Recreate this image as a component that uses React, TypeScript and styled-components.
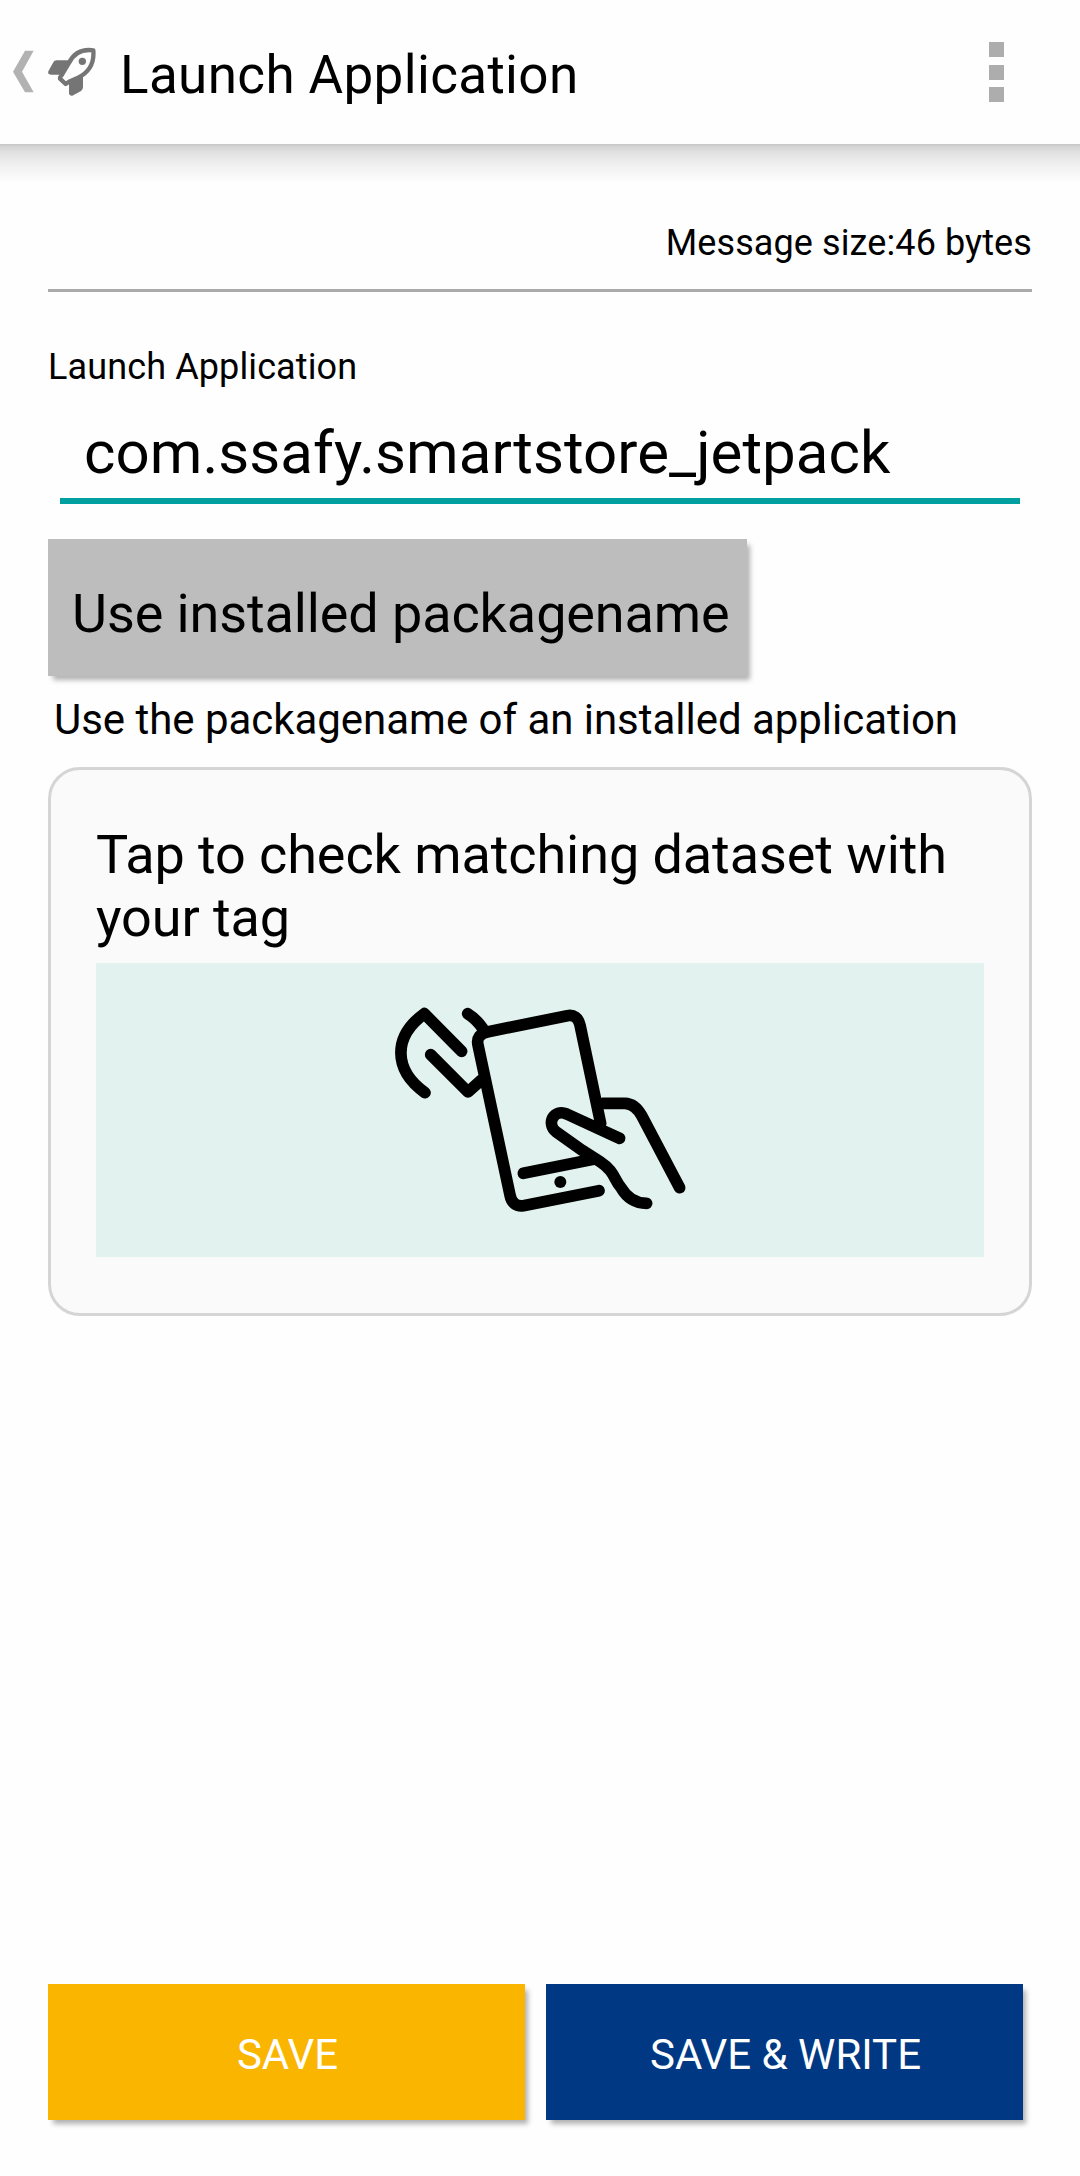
import React from "react";
import styled, { createGlobalStyle } from "styled-components";

const GlobalStyle = createGlobalStyle`
  * { box-sizing: border-box; }
  body {
    margin: 0;
    background: #fefefe;
    color: #000;
    font-family: Roboto, "Liberation Sans", sans-serif;
  }
  button {
    font-family: inherit;
    border: 0;
    margin: 0;
    padding: 0;
  }
`;

const Screen = styled.div`
  width: 1080px;
  height: 2176px;
  display: flex;
  flex-direction: column;
  overflow: hidden;
`;

const Header = styled.header`
  height: 144px;
  flex: none;
  display: flex;
  align-items: center;
  padding: 0 76px 0 12px;
  background: #fefefe;
`;

const HeaderShadow = styled.div`
  height: 40px;
  flex: none;
  background: linear-gradient(#c6c6c6 0, #d6d6d6 3px, #e2e2e2 9px, #efefef 20px, #f9f9f9 32px, #fefefe 40px);
`;

const Title = styled.h1`
  flex: 1;
  margin: 0 0 0 23px;
  padding-top: 5px;
  font-size: 53px;
  line-height: 62px;
  font-weight: 400;
  letter-spacing: 0.36px;
`;

const MenuButton = styled.button`
  display: flex;
  flex-direction: column;
  gap: 7.5px;
  background: none;
`;

const Square = styled.span`
  width: 15px;
  height: 15px;
  background: #adadad;
`;

const BackIcon = styled.svg`
  width: 23px;
  height: 44px;
`;

const RocketIcon = styled.svg`
  width: 50px;
  height: 50px;
  margin-left: 12px;
`;

const Content = styled.main`
  flex: 1;
  display: flex;
  flex-direction: column;
  padding: 38px 48px 56px;
`;

const Size = styled.div`
  height: 70px;
  border-bottom: 3px solid #aaa;
  text-align: right;
  font-size: 36px;
  line-height: 42px;
  letter-spacing: 0.1px;
`;

const Label = styled.label`
  margin-top: 54px;
  font-size: 36px;
  line-height: 42px;
  letter-spacing: 0.12px;
`;

const Field = styled.div`
  margin: 30px 12px 0;
  height: 86px;
  padding-left: 24px;
  border-bottom: 6px solid #00a0a0;
  font-size: 60px;
  line-height: 70px;
  letter-spacing: 0.05px;
`;

const cardShadow = "4px 5px 5px -1px rgba(0, 0, 0, 0.3)";

const PickButton = styled.button`
  margin-top: 35px;
  width: 699px;
  height: 137px;
  padding: 12px 0 0 24px;
  background: #bdbdbd;
  box-shadow: ${cardShadow};
  color: #000;
  font-size: 54px;
  letter-spacing: -0.11px;
  text-align: left;
`;

const Hint = styled.p`
  margin: 20px 0 0 6px;
  font-size: 42px;
  line-height: 48px;
  letter-spacing: -0.03px;
`;

const Card = styled.section`
  margin-top: 23px;
  height: 549px;
  border: 3px solid #d5d5d5;
  border-radius: 32px;
  background: #fafafa;
  padding: 53px 45px 0;
`;

const CardText = styled.p`
  margin: 0;
  height: 140px;
  font-size: 54px;
  line-height: 63px;
  letter-spacing: -0.09px;
  white-space: nowrap;
`;

const Panel = styled.div`
  height: 294px;
  display: flex;
  align-items: center;
  justify-content: center;
  background: #e2f2ee;
`;

const TapDrawing = styled.svg`
  width: 320px;
  height: 240px;
`;

const Actions = styled.footer`
  margin-top: auto;
  display: flex;
  gap: 21px;
`;

const Action = styled.button<{ $color: string }>`
  width: 477px;
  height: 136px;
  padding: 5px 0 0 2px;
  background: ${(p) => p.$color};
  box-shadow: ${cardShadow};
  color: #fff;
  font-size: 42px;
`;

export default function App() {
  return (
    <Screen>
      <GlobalStyle />
      <Header>
        <BackIcon viewBox="36 91 69 132">
          <path d="M39 156 75 93h26l-35 63 35 62H75Z" fill="#b2b2b2" />
        </BackIcon>
        <RocketIcon viewBox="142 81 150 150" fill="#757575">
          <path d="M208 121H171q-8 0-10 6L146 154q-3 10 8 10h37Z" />
          <path d="M208 190v30q1 9 10 7l26-14q6-4 6-12v-37Z" />
          <path
            d="M281 91C244 86 222 100 208 129L187 164q-7 7-6 12l17 16 10-7 27-12C268 157 284 128 281 91Z"
            fill="#fefefe"
            stroke="#757575"
            strokeWidth="13"
            strokeLinejoin="round"
          />
          <circle cx="248" cy="124" r="11" />
        </RocketIcon>
        <Title>Launch Application</Title>
        <MenuButton aria-label="More options">
          <Square />
          <Square />
          <Square />
        </MenuButton>
      </Header>
      <HeaderShadow />
      <Content>
        <Size>Message size:46 bytes</Size>
        <Label>Launch Application</Label>
        <Field>com.ssafy.smartstore_jetpack</Field>
        <PickButton>Use installed packagename</PickButton>
        <Hint>Use the packagename of an installed application</Hint>
        <Card>
          <CardText>
            Tap to check matching dataset with
            <br />
            your tag
          </CardText>
          <Panel>
            <TapDrawing
              viewBox="0 0 960 720"
              fill="none"
              stroke="#000"
              strokeWidth="35"
              strokeLinecap="round"
              strokeLinejoin="round"
            >
              <path d="M245 184 133 71C38 140 40 240 135 308" />
              <path d="M152 194 264 306l38-34M263 71q25 15 45 44" />
              <path d="M662 400 600 105Q592 72 562 77L325 125Q287 133 294 165L390 615Q397 651 430 647L657 602" />
              <path d="M430 550 640 508" />
              <path d="M719 445 560 372C522 356 497 400 529 426L605 480 660 515C705 545 700 565 723 593Q750 640 800 640" />
              <path d="M668 340H735Q765 341 785 377L899 593" />
              <circle cx="541" cy="576" r="18" fill="#000" stroke="none" />
            </TapDrawing>
          </Panel>
        </Card>
        <Actions>
          <Action $color="#fab500">SAVE</Action>
          <Action $color="#003883">SAVE &amp; WRITE</Action>
        </Actions>
      </Content>
    </Screen>
  );
}
